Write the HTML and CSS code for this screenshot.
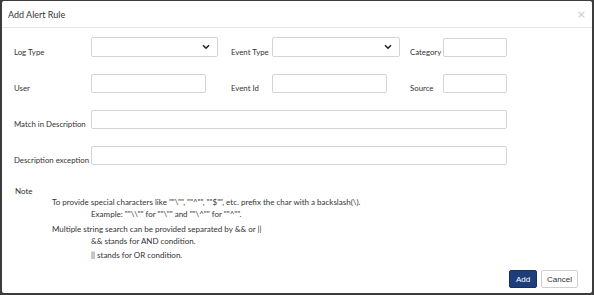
FILE: index.html
```html
<!DOCTYPE html>
<html>
<head>
<meta charset="utf-8">
<link rel="stylesheet" href="styles.css">
</head>
<body>
<div class="modal">
  <div class="modal-header">
    <span class="title">Add Alert Rule</span>
    <span class="close">×</span>
  </div>
  <div class="modal-body">
    <div class="grid">
      <label class="lbl">Log Type</label>
      <div class="field"><div class="select w127"><svg class="caret" width="8" height="6" viewBox="0 0 8 6"><path d="M1 1.2 L4 4.2 L7 1.2" fill="none" stroke="#222" stroke-width="1.6"/></svg></div></div>
      <label class="lbl">Event Type</label>
      <div class="field"><div class="select w128"><svg class="caret" width="8" height="6" viewBox="0 0 8 6"><path d="M1 1.2 L4 4.2 L7 1.2" fill="none" stroke="#222" stroke-width="1.6"/></svg></div></div>
      <label class="lbl">Category</label>
      <div class="field"><div class="input w64"></div></div>

      <label class="lbl">User</label>
      <div class="field"><div class="input w115"></div></div>
      <label class="lbl">Event Id</label>
      <div class="field"><div class="input w115"></div></div>
      <label class="lbl">Source</label>
      <div class="field"><div class="input w64"></div></div>

      <label class="lbl">Match in Description</label>
      <div class="field span"><div class="input wfull"></div></div>

      <label class="lbl">Description exception</label>
      <div class="field span"><div class="input wfull"></div></div>
    </div>

    <div class="note">
      <div class="note-title">Note</div>
      <div class="l1 g1">To provide special characters like ""\"", ""^"", ""$"", etc. prefix the char with a backslash(\).</div>
      <div class="l2 g2">Example: ""\\"" for ""\"" and ""\^"" for ""^"".</div>
      <div class="l1 g3">Multiple string search can be provided separated by &amp;&amp; or ||</div>
      <div class="l2 g2">&amp;&amp; stands for AND condition.</div>
      <div class="l2 g4">|| stands for OR condition.</div>
    </div>
  </div>
  <div class="modal-footer">
    <button class="btn btn-primary">Add</button>
    <button class="btn btn-default">Cancel</button>
  </div>
</div>
</body>
</html>
```
FILE: styles.css
```css
html, body {
  margin: 0;
  padding: 0;
  height: 100%;
}
body {
  background: #3c3c3c;
  padding: 1px 2px 2px 2px;
  box-sizing: border-box;
  font-family: Lato, "Open Sans", sans-serif;
  color: #333;
}
.modal {
  background: #fff;
  height: 100%;
  border-radius: 2px;
  display: flex;
  flex-direction: column;
}
.modal-header {
  height: 26px;
  border-bottom: 1px solid #e6e6e6;
  display: flex;
  align-items: center;
  justify-content: space-between;
  padding: 0 6px 0 6px;
}
.title {
  font-size: 9px;
  color: #333;
  padding-top: 1px;
}
.close {
  font-size: 11px;
  color: #c8c8c8;
  font-family: "DejaVu Sans", sans-serif;
}
.modal-body {
  padding: 9px 0 0 12px;
  flex: 1;
}
.grid {
  display: grid;
  grid-template-columns: 77px 140px 41px 138px 33px 64px;
  row-gap: 17px;
  align-items: end;
}
.lbl {
  font-size: 7.8px;
  line-height: 10px;
  color: #333;
  white-space: nowrap;
}
.field.span {
  grid-column: 2 / 7;
}
.input, .select {
  box-sizing: border-box;
  height: 19px;
  border: 1px solid #d4d4d4;
  border-radius: 2px;
  background: #fff;
}
.select {
  height: 20px;
  display: flex;
  align-items: center;
  justify-content: flex-end;
  padding-right: 7px;
}
.w127 { width: 127px; }
.w128 { width: 128px; }
.w115 { width: 115px; }
.w64 { width: 64px; }
.wfull { width: 416px; }
.note {
  margin-top: 21px;
  font-size: 8px;
  color: #333;
}
.note-title {
  margin-left: 1px;
  line-height: 10px;
}
.l1 { margin-left: 38px; line-height: 12px; }
.l2 { margin-left: 77px; line-height: 12px; }
.g1 { margin-top: 0; }
.g3 { margin-top: 3px; }
.g4 { margin-top: 2px; }
.modal-footer {
  display: flex;
  justify-content: flex-end;
  gap: 4px;
  padding: 0 14px 5px 0;
}
.btn {
  font-family: "Liberation Sans", Arial, sans-serif;
  font-size: 8px;
  height: 18px;
  border-radius: 2px;
  padding: 0;
  box-sizing: border-box;
}
.btn-primary {
  width: 28px;
  background: #1d3e7b;
  border: 1px solid #16305f;
  color: #fff;
}
.btn-default {
  width: 37px;
  background: #fff;
  border: 1px solid #d0d0d0;
  color: #333;
}
```
